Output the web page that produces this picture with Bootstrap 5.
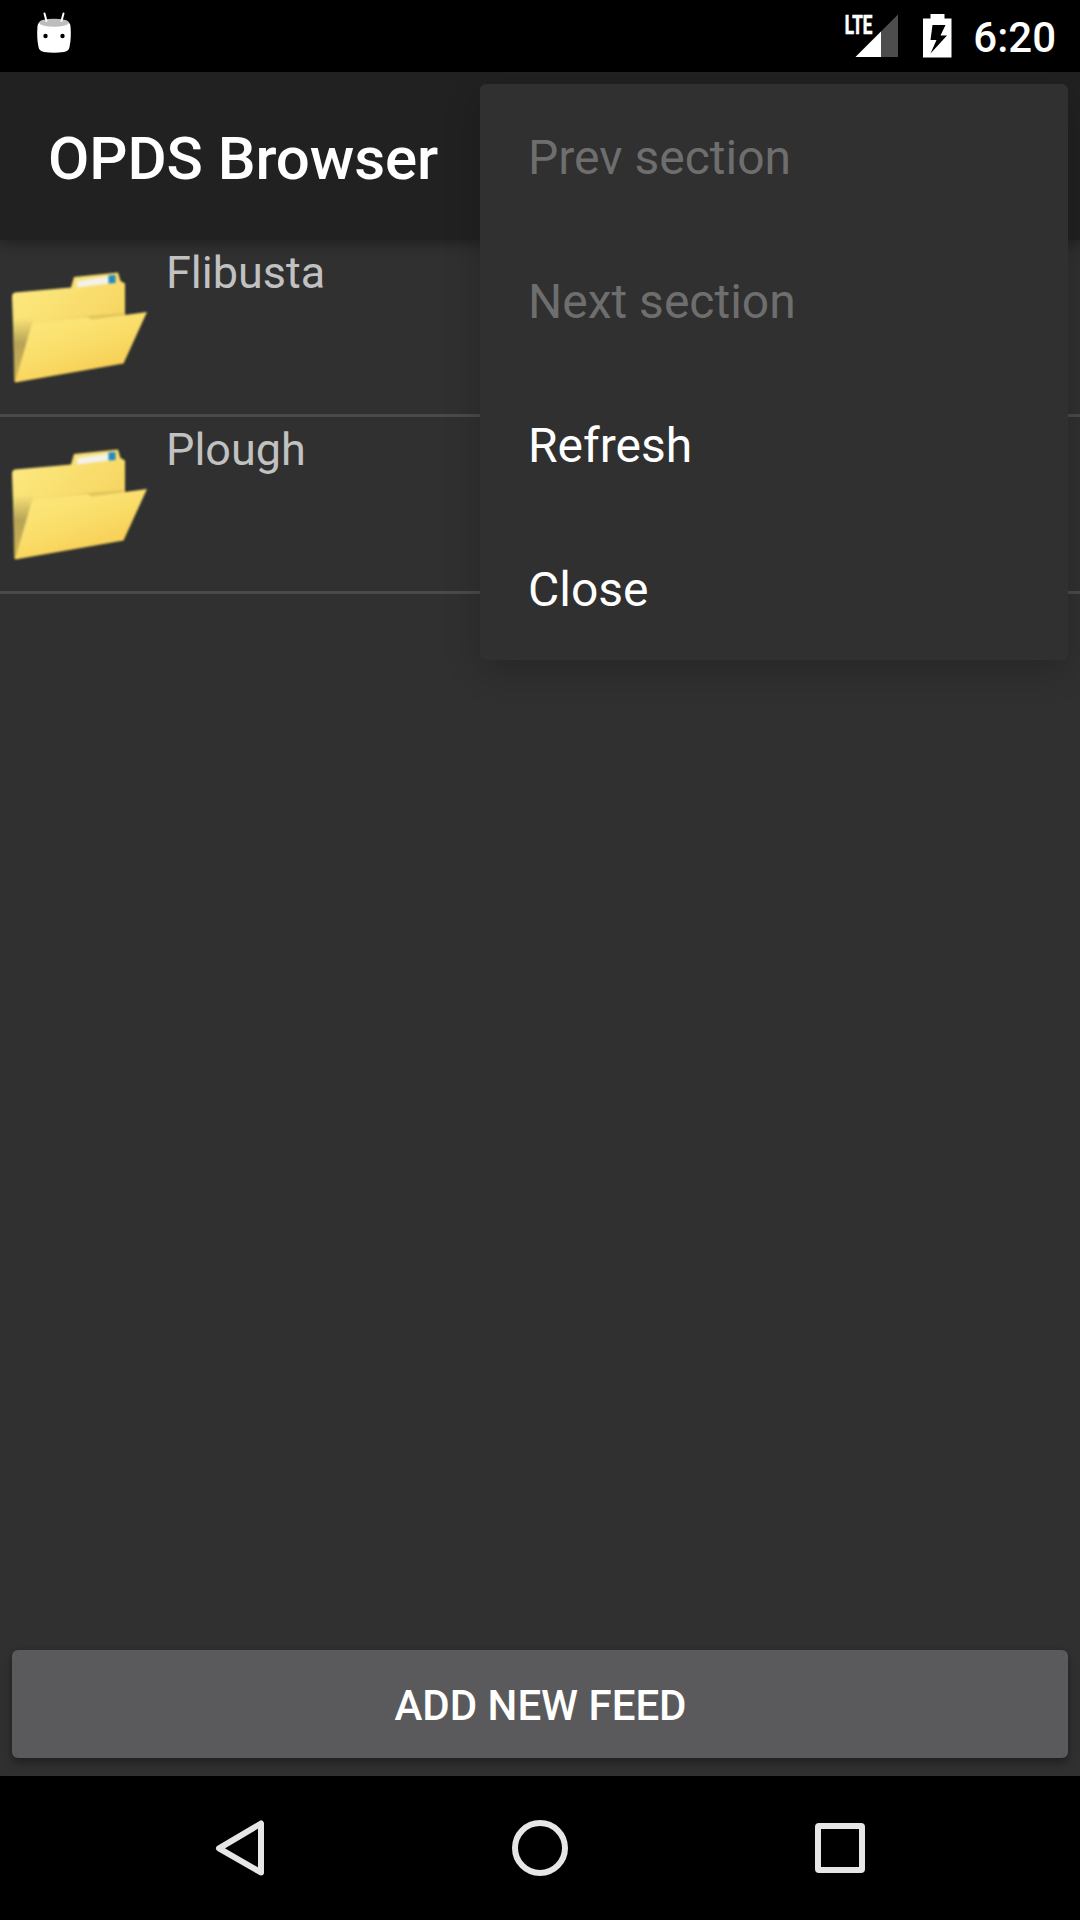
<!DOCTYPE html>
<html lang="en" data-bs-theme="dark">
<head>
<meta charset="utf-8">
<meta name="viewport" content="width=device-width, initial-scale=1">
<title>OPDS Browser</title>
<link href="https://cdn.jsdelivr.net/npm/bootstrap@5.3.0/dist/css/bootstrap.min.css" rel="stylesheet">
<style>
  body { font-family: Roboto, "Noto Sans", sans-serif; background: #303030; color: #fff; margin: 0; overflow: hidden; }
  .screen { width: 1080px; height: 1920px; }
  .status-bar { height: 72px; background: #000; padding: 0 24px 0 36px; }
  .clock { font-size: 42px; font-weight: 500; line-height: 42px; margin-top: 3px; }
  .app-bar { height: 168px; background: #212121; padding: 5px 48px 0; box-shadow: 0 4px 12px rgba(0,0,0,.32); z-index: 1; }
  .app-title { font-size: 60px; font-weight: 500; line-height: 70px; letter-spacing: -.08px; }
  .feed-list.list-group > .feed-row.list-group-item { height: 177px; padding: 0; border-width: 0 0 3px; border-style: solid; border-color: #4a4a4a; border-radius: 0; background: transparent; }
  .folder { width: 154px; height: 174px; }
  .feed-name { font-size: 45px; line-height: 54px; color: #c1c1c1; padding: 6px 0 0 12px; }
  .action-area { padding: 0 12px 18px; }
  .feed-btn { height: 108px; background: #5a5a5c; color: #fff; border: 0; border-radius: 6px; font-size: 42px; font-weight: 500; line-height: 42px; padding: 3px 0 0 1px; box-shadow: 0 6px 8px rgba(0,0,0,.24), 0 1px 5px rgba(0,0,0,.16); }
  .nav-keys { height: 144px; background: #000; }
  .overflow-menu { top: 84px; right: 12px; width: 588px; background: #303030; border: 0; border-radius: 6px; padding: 0; box-shadow: 0 10px 36px rgba(0,0,0,.2); z-index: 5; }
  .overflow-menu .dropdown-item { height: 144px; padding: 4px 48px 0; font-size: 48px; line-height: 56px; color: #fff; }
  .overflow-menu .dropdown-item.disabled { color: #6e6e6e; }
</style>
<script src="https://cdn.jsdelivr.net/npm/bootstrap@5.3.0/dist/js/bootstrap.bundle.min.js"></script>
</head>
<body>
<svg width="0" height="0" class="position-absolute" aria-hidden="true">
  <defs>
    <linearGradient id="backFill" x1="0" y1="0" x2="1" y2="1">
      <stop offset="0" stop-color="#fdec84"/><stop offset="1" stop-color="#f3cb51"/>
    </linearGradient>
    <linearGradient id="sideShade" x1="0" y1="0" x2="0" y2="1">
      <stop offset="0" stop-color="#a08f4d" stop-opacity="0"/><stop offset=".4" stop-color="#a08f4d" stop-opacity=".75"/><stop offset="1" stop-color="#c6a94e" stop-opacity=".75"/>
    </linearGradient>
    <linearGradient id="frontFill" x1=".1" y1="0" x2=".75" y2="1">
      <stop offset="0" stop-color="#fdea7f"/><stop offset=".5" stop-color="#fadd69"/><stop offset="1" stop-color="#f6c94e"/>
    </linearGradient>
    <filter id="soft" x="-5%" y="-5%" width="110%" height="110%" color-interpolation-filters="sRGB"><feGaussianBlur stdDeviation="1"/></filter>
    <symbol id="folder" viewBox="0 0 154 174">
      <g filter="url(#soft)">
        <path d="M12 57 Q12 53 15 52.500L71 47.500L74 37L118 32.500L120.500 41L125 43.500L125 120L15 142Z" fill="url(#backFill)"/>
        <path d="M77 41L110 36V43.500L77 47.500Z" fill="#f3f1ea"/>
        <path d="M108.500 35.500L115.500 35V43L108.500 43.500Z" fill="#2389c4"/>
        <path d="M13 78L34 78L17 138L14 142Z" fill="url(#sideShade)"/>
        <path d="M34 83L88 76L124 73V76L92 80L34 87Z" fill="#c6ae57" opacity=".45"/>
        <path d="M31 87Q32 83 36 82.500L87 77L92 79.500L147 72L123.500 123.500L15 142.500Z" fill="url(#frontFill)"/>
      </g>
    </symbol>
  </defs>
</svg>

<div class="screen d-flex flex-column position-relative">
  <header class="status-bar d-flex align-items-center justify-content-between flex-shrink-0">
    <svg width="36" height="72" viewBox="36 0 36 72">
      <path d="M37.500 26Q38 22 42 21H66Q70 22 70.500 26Q71.500 38 69.500 47Q69 51 64 52Q54 53.500 44 52Q39 51 38.500 47Q36.500 38 37.500 26Z" fill="#fff"/>
      <ellipse cx="54" cy="22.700" rx="14.800" ry="4" fill="#bdbdbd"/>
      <path d="M44.500 13.500L46.500 21M63.500 13.500L61.500 21" stroke="#fff" stroke-width="2" stroke-linecap="round"/>
      <circle cx="45.500" cy="36" r="2.200"/><circle cx="62.500" cy="36" r="2.200"/>
    </svg>
    <div class="d-flex align-items-center">
      <svg width="128" height="72" viewBox="845 0 128 72" overflow="visible">
        <path d="M855.500 57L898 14.500V57Z" fill="#4d4d4d"/>
        <path d="M855.500 57L881 31.500V57Z" fill="#fff"/>
        <text x="844.800" y="33.500" font-family="Roboto, sans-serif" font-size="26" font-weight="700" fill="#fff" stroke="#fff" stroke-width=".7" textLength="27.500" lengthAdjust="spacingAndGlyphs">LTE</text>
        <path fill-rule="evenodd" d="M923 18.500H930.500V14H944.500V18.500H951.500V57.500H923ZM932.500 25L930.500 40H936.500L930.500 53.500L947 35.500H940.500L945.500 25Z" fill="#fff"/>
      </svg>
      <span class="clock">6:20</span>
    </div>
  </header>

  <div class="app-bar d-flex align-items-center flex-shrink-0 position-relative">
    <h1 class="app-title m-0">OPDS Browser</h1>
  </div>

  <main class="flex-grow-1 d-flex flex-column justify-content-between">
    <div class="list-group feed-list">
      <div class="list-group-item feed-row d-flex">
        <svg class="folder flex-shrink-0"><use href="#folder"/></svg>
        <span class="feed-name">Flibusta</span>
      </div>
      <div class="list-group-item feed-row d-flex">
        <svg class="folder flex-shrink-0"><use href="#folder"/></svg>
        <span class="feed-name">Plough</span>
      </div>
    </div>
    <div class="action-area">
      <button type="button" class="btn feed-btn w-100">ADD NEW FEED</button>
    </div>
  </main>

  <footer class="nav-keys d-flex flex-shrink-0 justify-content-center">
    <svg width="1080" height="144" viewBox="0 0 1080 144" fill="none" stroke="#e6e6e6" stroke-width="6" stroke-linejoin="round">
      <path d="M261 47.500V96.500L219 72.300Z"/>
      <circle cx="540" cy="72" r="25"/>
      <rect x="818" y="50" width="44" height="44" rx="1"/>
    </svg>
  </footer>

  <div class="dropdown-menu overflow-menu show position-absolute">
    <a class="dropdown-item disabled d-flex align-items-center">Prev section</a>
    <a class="dropdown-item disabled d-flex align-items-center">Next section</a>
    <a class="dropdown-item d-flex align-items-center" href="#">Refresh</a>
    <a class="dropdown-item d-flex align-items-center" href="#">Close</a>
  </div>
</div>
</body>
</html>
